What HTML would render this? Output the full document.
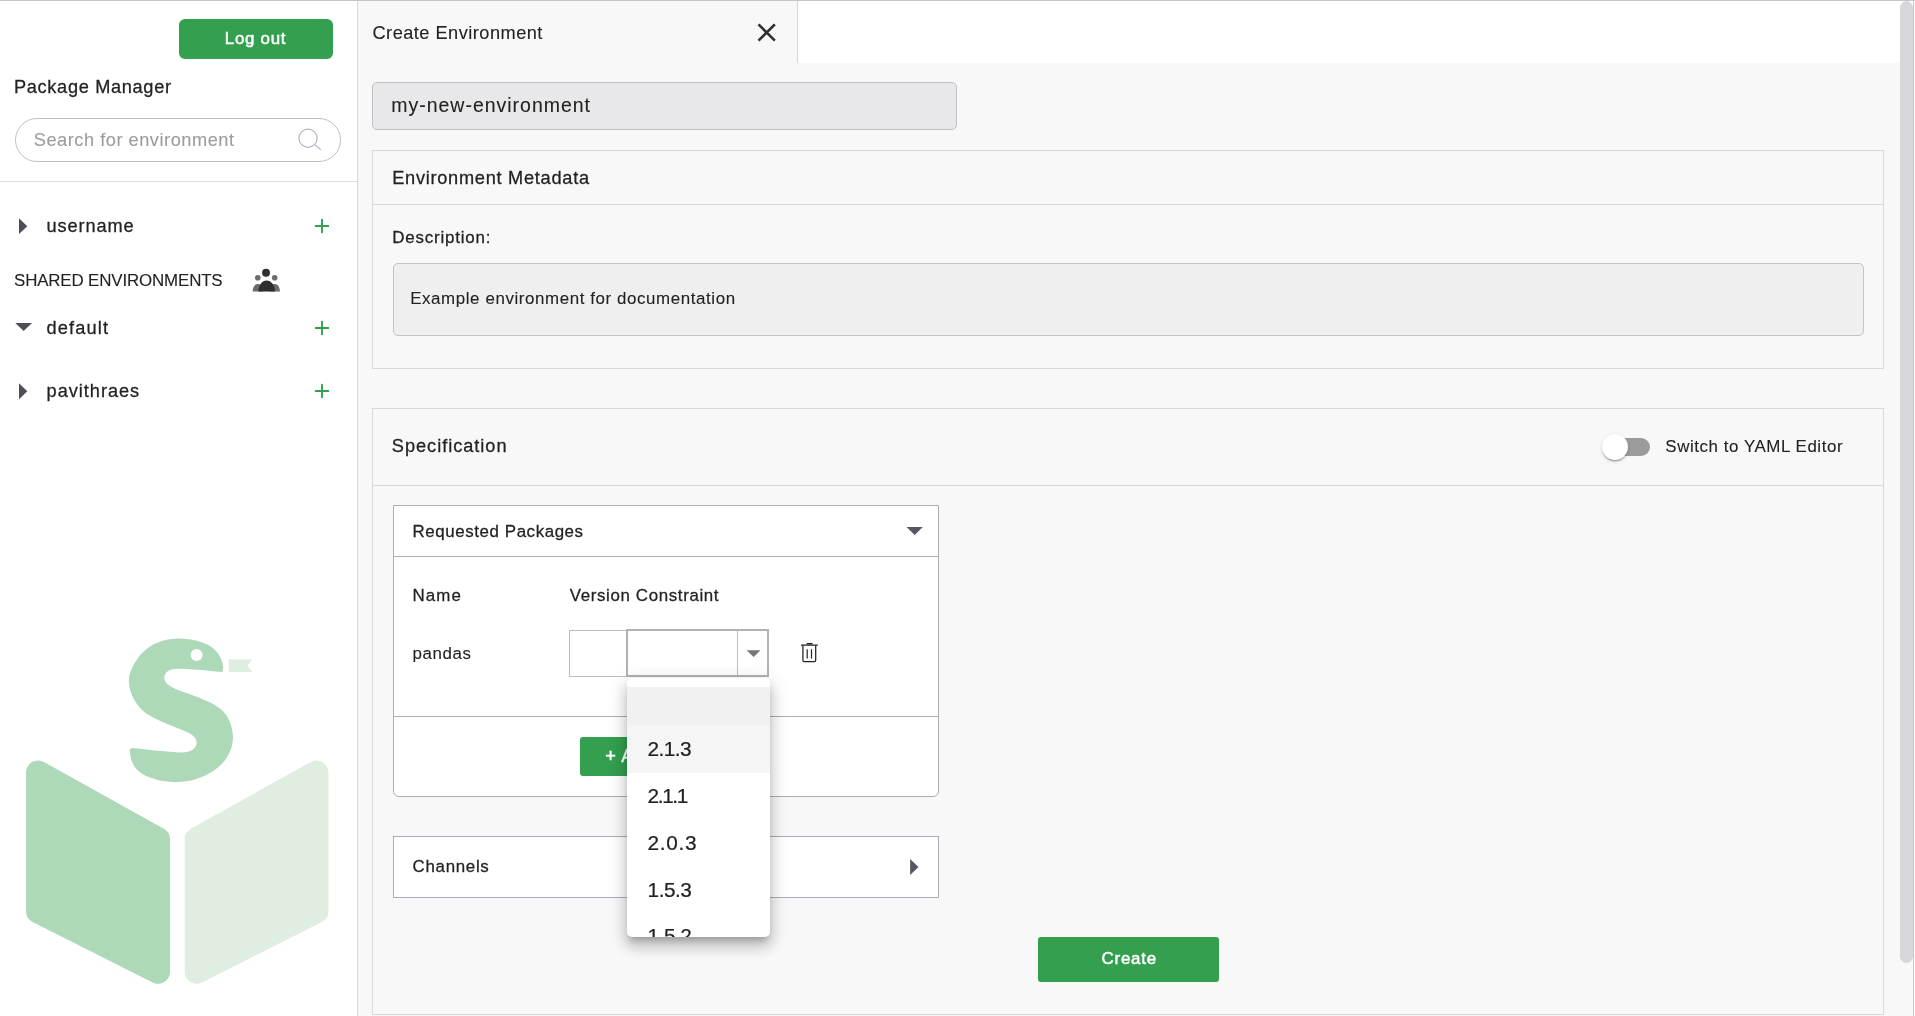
<!DOCTYPE html>
<html lang="en">
<head>
<meta charset="utf-8">
<title>Package Manager</title>
<style>
*{box-sizing:border-box;margin:0;padding:0}
html,body{width:1915px;height:1016px;overflow:hidden;background:#fff}
body{font-family:"Liberation Sans",sans-serif;color:#222;position:relative;will-change:transform}
.abs{position:absolute}
.t{position:absolute;white-space:nowrap;line-height:1}
.box{position:absolute;border:1px solid #d9d9db;background:#f8f8f8}
.hline{position:absolute;height:1px;background:#d9d9db}
.wbox{position:absolute;border:1px solid #aaadb7;background:#fff}
.gbtn{position:absolute;background:#339f4f;color:#fff;font-weight:bold;white-space:nowrap;overflow:hidden}
</style>
</head>
<body>
<div class="abs" style="left:0;top:1px;width:357px;height:1015px;background:#fff"></div>
<div class="abs" style="left:357px;top:1px;width:1px;height:1015px;background:#d8d8da"></div>
<div class="abs" style="left:358px;top:1px;width:1555px;height:1015px;background:#f8f8f8"></div>
<div class="abs" style="left:798px;top:1px;width:1115px;height:62px;background:#fff"></div>
<div class="abs" style="left:797px;top:1px;width:1px;height:62px;background:#d6d6d8"></div>
<div class="abs" style="left:0;top:0;width:1915px;height:1px;background:#c6c6c8"></div>
<div class="gbtn" style="left:179px;top:19px;width:154px;height:40px;border-radius:6px"></div>
<div class="t" id="t-logout" style="left:224.8px;top:31px;font-size:16.9px;letter-spacing:0.73px;color:#fff;-webkit-text-stroke:0.5px #fff;">Log out</div>
<div class="abs" style="left:15px;top:118px;width:326px;height:44px;border:1px solid #c1c1c4;border-radius:22px;background:#fff"></div>
<svg class="abs" style="left:294px;top:124px" width="32" height="30" viewBox="294 124 32 30"><circle cx="308.05" cy="138.25" r="9.1" fill="none" stroke="#b3b5c1" stroke-width="1.2"/><path d="M314.6 144.6 L320.8 149.7" stroke="#b3b5c1" stroke-width="1.2" fill="none"/></svg>
<div class="abs" style="left:0;top:181px;width:357px;height:1px;background:#dcdcde"></div>
<svg class="abs" style="left:18px;top:217px" width="11" height="19" viewBox="18 217 11 19"><path d="M19 218.2 L27.3 226.15 L19 234.1 Z" fill="#4c4f58"/></svg>
<svg class="abs" style="left:311.75px;top:215.75px" width="20" height="20" viewBox="-10 -10 20 20"><path d="M-6.3 0 H6.3 M0 -6.3 V6.3" stroke="#339f4f" stroke-width="1.9" stroke-linecap="round" fill="none"/></svg>
<svg class="abs" style="left:250px;top:266px" width="32" height="28" viewBox="250 266 32 28"><circle cx="257.8" cy="277.8" r="2.8" fill="#6b6b6b"/><circle cx="274.7" cy="277.8" r="2.8" fill="#6b6b6b"/><path d="M252.6 291.5 C252.8 287 254.8 284 257.8 284 C260.8 284 262.5 286 263 291.5 Z" fill="#6b6b6b"/><path d="M280 291.5 C279.8 287 277.8 284 274.8 284 C271.8 284 270 286 269.5 291.5 Z" fill="#6b6b6b"/><circle cx="266.05" cy="272.8" r="3.95" fill="#2e2e2e"/><path d="M258.3 291.5 C258.8 284.5 262 280.5 266.6 280.5 C271.2 280.5 274.5 284.5 275 291.5 Z" fill="#2e2e2e"/></svg>
<svg class="abs" style="left:14px;top:321px" width="19" height="11" viewBox="14 321 19 11"><path d="M15.3 322.9 L32 322.9 L23.65 331 Z" fill="#4c4f58"/></svg>
<svg class="abs" style="left:311.75px;top:318px" width="20" height="20" viewBox="-10 -10 20 20"><path d="M-6.3 0 H6.3 M0 -6.3 V6.3" stroke="#339f4f" stroke-width="1.9" stroke-linecap="round" fill="none"/></svg>
<svg class="abs" style="left:18px;top:382px" width="11" height="19" viewBox="18 382 11 19"><path d="M19 383.3 L27.3 391.25 L19 399.2 Z" fill="#4c4f58"/></svg>
<svg class="abs" style="left:311.75px;top:380.75px" width="20" height="20" viewBox="-10 -10 20 20"><path d="M-6.3 0 H6.3 M0 -6.3 V6.3" stroke="#339f4f" stroke-width="1.9" stroke-linecap="round" fill="none"/></svg>
<div class="t" id="t-pm" style="left:14.0px;top:78px;font-size:18.2px;letter-spacing:0.67px;color:#222;-webkit-text-stroke:0.27px #222;">Package Manager</div>
<div class="t" id="t-search" style="left:33.8px;top:131px;font-size:18.2px;letter-spacing:0.53px;color:#9c9c9e;-webkit-text-stroke:0.1px #9c9c9e;">Search for environment</div>
<div class="t" id="t-username" style="left:46.6px;top:217px;font-size:18.2px;letter-spacing:0.89px;color:#222;-webkit-text-stroke:0.27px #222;">username</div>
<div class="t" id="t-shared" style="left:14.0px;top:273px;font-size:16.9px;letter-spacing:-0.14px;color:#222;-webkit-text-stroke:0.1px #222;">SHARED ENVIRONMENTS</div>
<div class="t" id="t-default" style="left:46.6px;top:319px;font-size:18.2px;letter-spacing:1.15px;color:#222;-webkit-text-stroke:0.27px #222;">default</div>
<div class="t" id="t-pavi" style="left:46.6px;top:382px;font-size:18.2px;letter-spacing:0.96px;color:#222;-webkit-text-stroke:0.27px #222;">pavithraes</div>
<svg class="abs" style="left:20px;top:630px" width="320" height="370" viewBox="20 630 320 370"><path d="M26.0 772.4 A12 12 0 0 1 43.8 761.9 L163.8 828.8 A12 12 0 0 1 170.0 839.3 L170.0 971.9 A12 12 0 0 1 152.6 982.6 L32.6 922.0 A12 12 0 0 1 26.0 911.3 Z" fill="#add9b9"/><path d="M328.5 772.4 A12 12 0 0 0 310.7 762.0 L190.9 828.8 A12 12 0 0 0 184.7 839.2 L184.7 971.9 A12 12 0 0 0 202.1 982.6 L321.9 922.0 A12 12 0 0 0 328.5 911.3 Z" fill="#dfeee1"/><path d="M222.6 671.9 C224.5 664 220.5 655.5 214.5 649.5 C206 642 193 638.6 178 638.6 C160 638.6 146 647 138 658 C131.5 667 128.5 675 128.9 682 C129.5 694 135.5 704 144.3 712.1 C152 718 165 723.5 179.7 729 C188 732 196.6 736 196.6 742.3 C196.6 748.5 191 752.4 181.5 752.4 C168 752 150 750 133 748 C130 747.7 129.5 750 130 753 C131 765 138 774.5 153.2 778.6 C161 781.5 170 782.3 178 782.1 C196 781.5 212 774 222.3 763.5 C230 755 233.5 745 232.9 735.2 C232.4 725 228 716 222.3 710.4 C214 703 200 698 185 692.6 C176 689.5 164.3 685 164.3 678.5 C164.3 671.5 170 668.7 178 668.7 C190 668.8 205 670.5 222.6 671.9 Z" fill="#add9b9"/><circle cx="196.6" cy="654.9" r="6" fill="#fff"/><path d="M228.8 659.3 L252.2 659.3 L247.7 665.7 L252.2 672.1 L228.8 672.1 Z" fill="#dfeee1"/></svg>
<svg class="abs" style="left:754px;top:20px" width="26" height="26" viewBox="754 20 26 26"><path d="M758.55 24.35 L774.85 40.65 M774.85 24.35 L758.55 40.65" stroke="#2e2f31" stroke-width="2.6" fill="none"/></svg>
<div class="abs" style="left:372px;top:82px;width:585px;height:48px;background:#e8e8ea;border:1px solid #c0c0c4;border-radius:5px"></div>
<div class="box" style="left:372px;top:150px;width:1512px;height:219px"></div>
<div class="hline" style="left:373px;top:204px;width:1510px"></div>
<div class="abs" style="left:393px;top:263px;width:1471px;height:73px;background:#efefef;border:1px solid #c4c4c8;border-radius:5px"></div>
<div class="box" style="left:372px;top:408px;width:1512px;height:607px"></div>
<div class="hline" style="left:373px;top:485px;width:1510px"></div>
<div class="abs" style="left:1606px;top:438px;width:44px;height:18px;border-radius:9px;background:#9b9b9b"></div>
<div class="abs" style="left:1602px;top:434px;width:26px;height:26px;border-radius:13px;background:#fff;box-shadow:0 2.5px 1.5px -1px rgba(0,0,0,.2),0 1.3px 1.3px 0 rgba(0,0,0,.14),0 1.3px 4px 0 rgba(0,0,0,.12)"></div>
<div class="wbox" style="left:393px;top:505px;width:546px;height:292px;border-radius:0 0 6px 6px"></div>
<div class="hline" style="left:394px;top:556px;width:544px;background:#aaadb7"></div>
<div class="hline" style="left:394px;top:716px;width:544px;background:#aaadb7"></div>
<svg class="abs" style="left:905px;top:525px" width="19" height="11" viewBox="905 525 19 11"><path d="M906.6 526.9 L922.8 526.9 L914.7 535 Z" fill="#54575f"/></svg>
<div class="abs" style="left:569px;top:630px;width:58px;height:47px;border:1px solid #bdbdbd;background:#fff"></div>
<div class="abs" style="left:626px;top:629px;width:143px;height:48px;border:2px solid #b2b2b2;background:#fff"></div>
<div class="abs" style="left:737px;top:631px;width:1px;height:44px;background:#c0c0c4"></div>
<svg class="abs" style="left:745px;top:649px" width="17" height="10" viewBox="745 649 17 10"><path d="M746.7 650.2 L760.5 650.2 L753.6 657.1 Z" fill="#757575"/></svg>
<svg class="abs" style="left:798px;top:640px" width="24" height="26" viewBox="798 640 24 26"><path d="M801 645.2 H817.8 M806.6 643.7 H812.5" stroke="#222" stroke-width="1.25" fill="none"/><path d="M802.9 645.2 V660.2 Q802.9 661.6 804.3 661.6 H814.3 Q815.7 661.6 815.7 660.2 V645.2" stroke="#222" stroke-width="1.25" fill="none"/><path d="M807.2 649.3 V658.4 M811.5 649.3 V658.4" stroke="#222" stroke-width="1.2" fill="none"/></svg>
<div class="gbtn" style="left:580px;top:737px;width:150px;height:39px;border-radius:3px"></div>
<div class="t" id="t-add" style="left:605.3px;top:747px;font-size:18.2px;letter-spacing:0.7px;color:#fff;-webkit-text-stroke:0.5px #fff;">+ Add Package</div>
<div class="wbox" style="left:393px;top:836px;width:546px;height:62px"></div>
<svg class="abs" style="left:909px;top:858px" width="11" height="19" viewBox="909 858 11 19"><path d="M910.1 859.1 L918.5 867.1 L910.1 875.1 Z" fill="#54575f"/></svg>
<div class="t" id="t-createenv" style="left:372.5px;top:24px;font-size:18.2px;letter-spacing:0.48px;color:#222;-webkit-text-stroke:0.1px #222;">Create Environment</div>
<div class="t" id="t-mynew" style="left:391.3px;top:96px;font-size:19.5px;letter-spacing:0.98px;color:#222;-webkit-text-stroke:0.1px #222;">my-new-environment</div>
<div class="t" id="t-envmeta" style="left:392.2px;top:169px;font-size:18.2px;letter-spacing:0.73px;color:#222;-webkit-text-stroke:0.27px #222;">Environment Metadata</div>
<div class="t" id="t-desc" style="left:392.2px;top:230px;font-size:16.9px;letter-spacing:0.83px;color:#222;-webkit-text-stroke:0.27px #222;">Description:</div>
<div class="t" id="t-example" style="left:410.2px;top:291px;font-size:16.9px;letter-spacing:0.6px;color:#222;-webkit-text-stroke:0.1px #222;">Example environment for documentation</div>
<div class="t" id="t-spec" style="left:391.8px;top:437px;font-size:18.2px;letter-spacing:0.97px;color:#222;-webkit-text-stroke:0.27px #222;">Specification</div>
<div class="t" id="t-switch" style="left:1665.3px;top:439px;font-size:16.9px;letter-spacing:0.57px;color:#222;-webkit-text-stroke:0.1px #222;">Switch to YAML Editor</div>
<div class="t" id="t-reqpk" style="left:412.6px;top:524px;font-size:16.9px;letter-spacing:0.58px;color:#222;-webkit-text-stroke:0.27px #222;">Requested Packages</div>
<div class="t" id="t-name" style="left:412.6px;top:588px;font-size:16.9px;letter-spacing:1.07px;color:#222;-webkit-text-stroke:0.27px #222;">Name</div>
<div class="t" id="t-vercon" style="left:569.8px;top:588px;font-size:16.9px;letter-spacing:0.63px;color:#222;-webkit-text-stroke:0.27px #222;">Version Constraint</div>
<div class="t" id="t-pandas" style="left:412.6px;top:646px;font-size:16.9px;letter-spacing:0.6px;color:#222;-webkit-text-stroke:0.1px #222;">pandas</div>
<div class="t" id="t-channels" style="left:412.6px;top:859px;font-size:16.9px;letter-spacing:0.69px;color:#222;-webkit-text-stroke:0.27px #222;">Channels</div>
<div class="abs" style="left:627px;top:678px;width:143px;height:259px;background:#fff;border-radius:5px;box-shadow:0 6px 6px -3px rgba(0,0,0,.2),0 10px 13px 1px rgba(0,0,0,.14),0 4px 18px 3px rgba(0,0,0,.12);overflow:hidden">
<div class="abs" style="left:0;top:9px;width:143px;height:38px;background:#f1f1f1"></div>
<div class="abs" style="left:0;top:47px;width:143px;height:48px;background:#f5f5f5"></div>
<div class="t" id="t-v0" style="left:20.6px;top:61px;font-size:20.8px;letter-spacing:-0.6px;color:#1f1f1f;-webkit-text-stroke:0.22px #1f1f1f;">2.1.3</div>
<div class="t" id="t-v1" style="left:20.6px;top:108px;font-size:20.8px;letter-spacing:-1.4px;color:#1f1f1f;-webkit-text-stroke:0.22px #1f1f1f;">2.1.1</div>
<div class="t" id="t-v2" style="left:20.6px;top:155px;font-size:20.8px;letter-spacing:0.65px;color:#1f1f1f;-webkit-text-stroke:0.22px #1f1f1f;">2.0.3</div>
<div class="t" id="t-v3" style="left:20.6px;top:202px;font-size:20.8px;letter-spacing:-0.5px;color:#1f1f1f;-webkit-text-stroke:0.22px #1f1f1f;">1.5.3</div>
<div class="t" id="t-v4" style="left:20.6px;top:248px;font-size:20.8px;letter-spacing:-0.5px;color:#1f1f1f;-webkit-text-stroke:0.22px #1f1f1f;">1.5.2</div>
</div>
<div class="gbtn" style="left:1038px;top:937px;width:181px;height:45px;border-radius:3px"></div>
<div class="t" id="t-create" style="left:1101.5px;top:951px;font-size:16.9px;letter-spacing:0.78px;color:#fff;-webkit-text-stroke:0.5px #fff;">Create</div>
<div class="abs" style="left:1913px;top:0;width:1px;height:1016px;background:#cacaca"></div>
<div class="abs" style="left:1914px;top:1px;width:1px;height:1015px;background:#fafafa"></div>
<div class="abs" style="left:1900px;top:1px;width:13px;height:962px;background:#d6d7db;border-radius:6.5px"></div>
</body>
</html>
